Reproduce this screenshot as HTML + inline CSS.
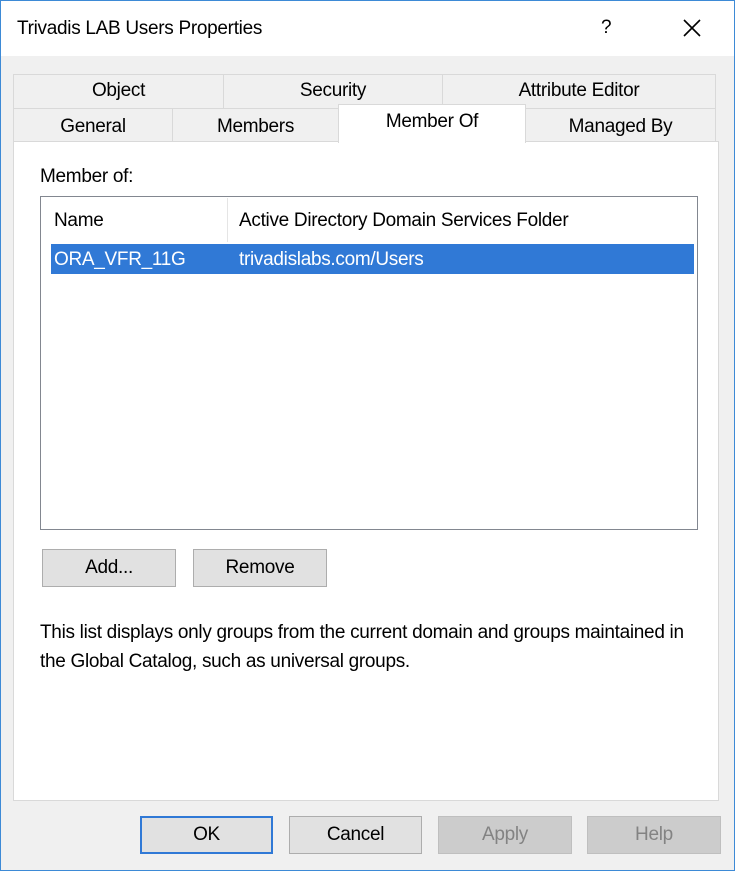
<!DOCTYPE html><html><head><style>
*{margin:0;padding:0;box-sizing:border-box}
body{width:735px;height:871px;background:#f0f0f0;font-family:"Liberation Sans",sans-serif;font-size:19px;color:#000;position:relative;overflow:hidden;letter-spacing:-0.3px}
.a{position:absolute}
.win{left:0;top:0;width:735px;height:871px;border:1px solid #3d8ad6;}
.title{left:1px;top:1px;width:733px;height:55px;background:#fff}
.tab{position:absolute;background:#f0f0f0;border:1px solid #d9d9d9;text-align:center;line-height:32px}
.btn{position:absolute;background:#e1e1e1;border:1px solid #adadad;text-align:center;line-height:35px}
</style></head><body>
<div class="a win"></div>
<div class="a title"></div>
<div class="a" style="left:17px;top:18px">Trivadis LAB Users Properties</div>
<div class="a" style="left:601px;top:17px">?</div>
<svg class="a" style="left:683px;top:19px" width="18" height="18"><path d="M1 1L17 17M17 1L1 17" stroke="#000" stroke-width="1.6"/></svg>
<div class="tab" style="left:13px;top:74px;width:211px;height:35px">Object</div>
<div class="tab" style="left:223px;top:74px;width:220px;height:35px">Security</div>
<div class="tab" style="left:442px;top:74px;width:274px;height:35px">Attribute Editor</div>
<div class="tab" style="left:13px;top:108px;width:160px;height:35px;line-height:36px">General</div>
<div class="tab" style="left:172px;top:108px;width:167px;height:35px;line-height:36px">Members</div>
<div class="tab" style="left:525px;top:108px;width:191px;height:35px;line-height:36px">Managed By</div>
<div class="a" style="left:13px;top:141px;width:706px;height:660px;background:#fff;border:1px solid #d9d9d9"></div>
<div class="tab" style="left:338px;top:104px;width:188px;height:39px;background:#fff;border-bottom:none;line-height:34px">Member Of</div>
<div class="a" style="left:40px;top:166px">Member of:</div>
<div class="a" style="left:40px;top:196px;width:658px;height:334px;border:1px solid #828790;background:#fff"></div>
<div class="a" style="left:227px;top:198px;width:1px;height:44px;background:#e5e5e5"></div>
<div class="a" style="left:54px;top:210px">Name</div>
<div class="a" style="left:239px;top:210px">Active Directory Domain Services Folder</div>
<div class="a" style="left:51px;top:244px;width:643px;height:30px;background:#3079d6"></div>
<div class="a" style="left:54px;top:249px;color:#fff">ORA_VFR_11G</div>
<div class="a" style="left:239px;top:249px;color:#fff">trivadislabs.com/Users</div>
<div class="btn" style="left:42px;top:549px;width:134px;height:38px">Add...</div>
<div class="btn" style="left:193px;top:549px;width:134px;height:38px">Remove</div>
<div class="a" style="left:40px;top:618px;line-height:29px;width:665px">This list displays only groups from the current domain and groups maintained in the Global Catalog, such as universal groups.</div>
<div class="btn" style="left:140px;top:816px;width:133px;height:38px;border:2px solid #3079d6;line-height:34px">OK</div>
<div class="btn" style="left:289px;top:816px;width:133px;height:38px">Cancel</div>
<div class="btn" style="left:438px;top:816px;width:134px;height:38px;background:#cccccc;border-color:#bfbfbf;color:#838383">Apply</div>
<div class="btn" style="left:587px;top:816px;width:134px;height:38px;background:#cccccc;border-color:#bfbfbf;color:#838383">Help</div>
</body></html>
